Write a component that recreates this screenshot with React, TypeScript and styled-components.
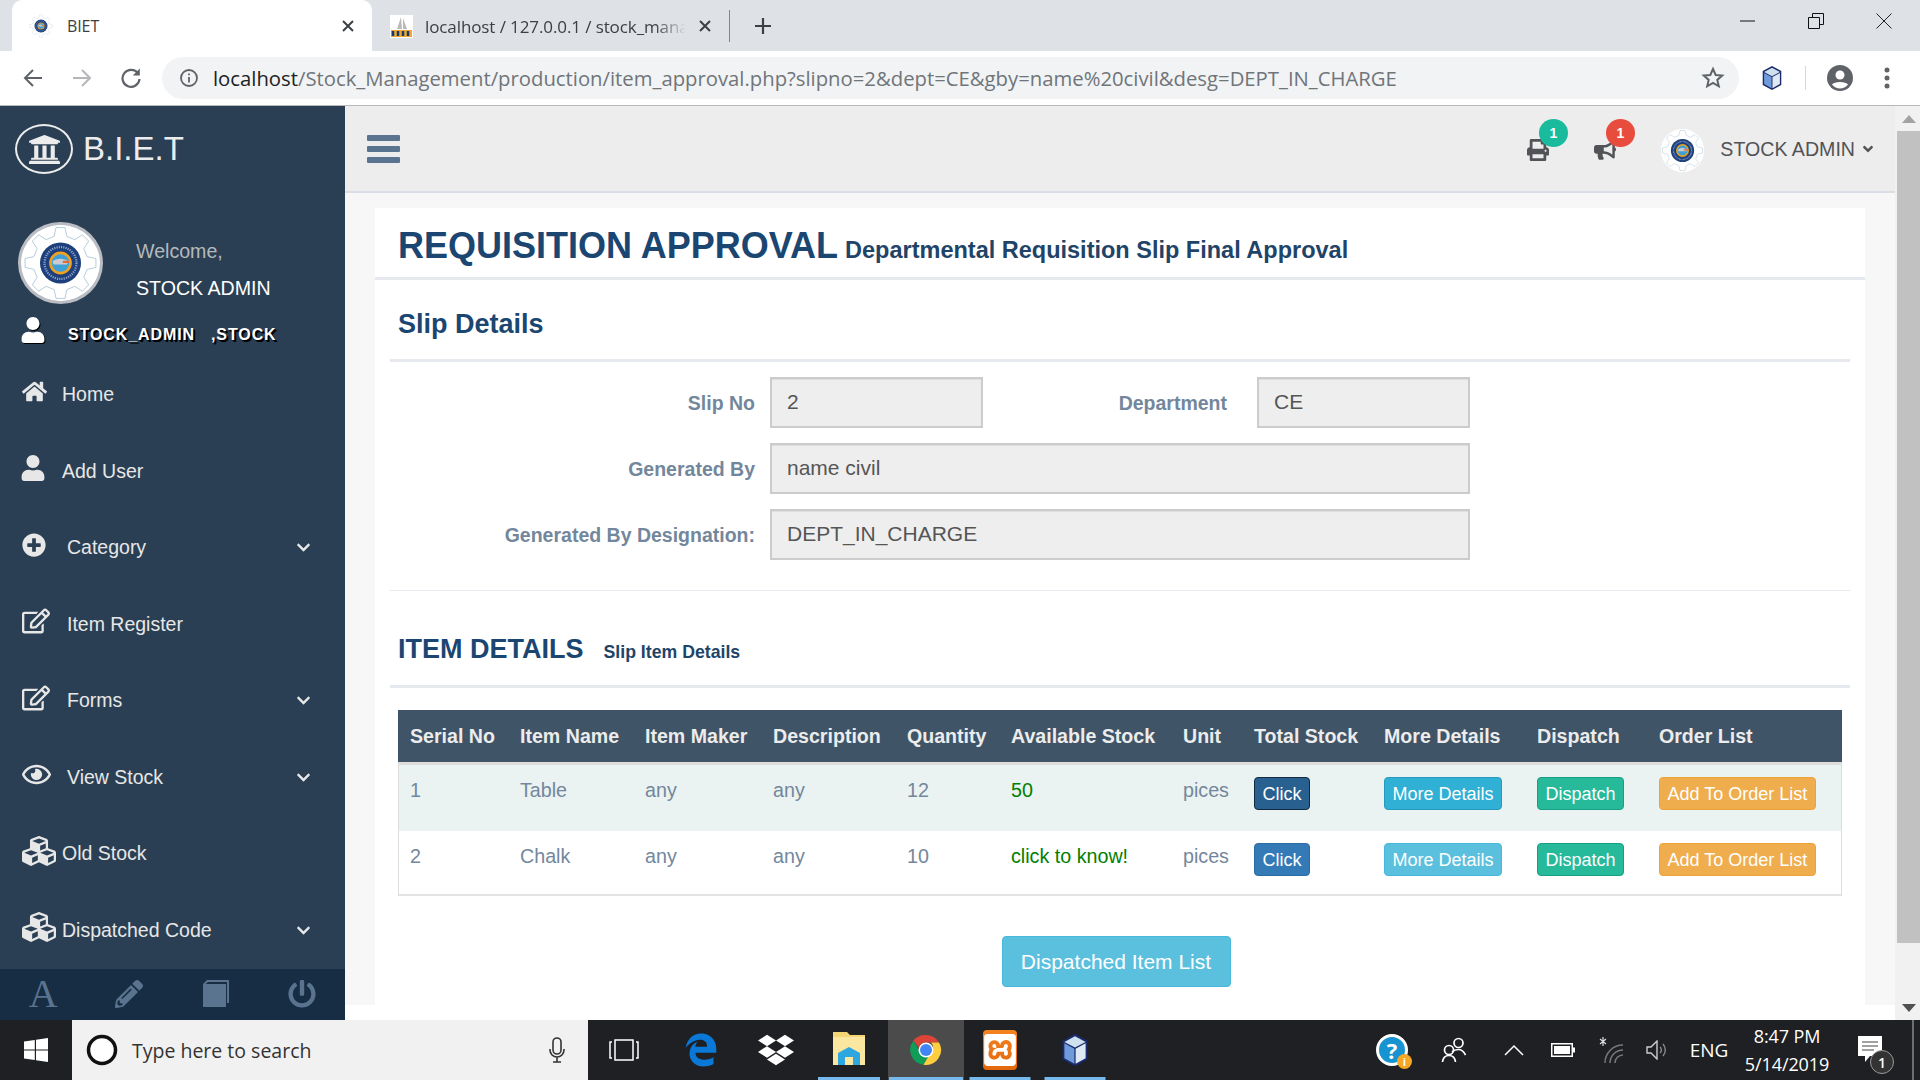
import React from "react";
import styled, { createGlobalStyle } from "styled-components";
import {
  FaAngleDown,
  FaBullhorn,
  FaChevronDown,
  FaCubes,
  FaDropbox,
  FaEdgeLegacy,
  FaHome,
  FaPencilAlt,
  FaPlusCircle,
  FaPowerOff,
  FaPrint,
  FaRegEdit,
  FaRegEye,
  FaUniversity,
  FaUser,
} from "react-icons/fa";
import { SiXampp } from "react-icons/si";

const GlobalStyle = createGlobalStyle`
  html, body {
    margin: 0;
    padding: 0;
    width: 1920px;
    height: 1080px;
    overflow: hidden;
    background: #fff;
    font-family: "Liberation Sans", Arial, sans-serif;
  }
  * { box-sizing: border-box; }
`;

const Screen = styled.div`
  width: 1920px;
  height: 1080px;
  display: flex;
  flex-direction: column;
  overflow: hidden;
`;

/* ---------- browser chrome ---------- */

const TabStrip = styled.div`
  height: 51px;
  flex-shrink: 0;
  background: #dee1e6;
  display: flex;
  align-items: stretch;
  padding-left: 12px;
  font-family: "Open Sans", sans-serif;
  font-size: 16px;
  color: #3c4043;
`;

const ActiveTab = styled.div`
  width: 360px;
  background: #fff;
  border-radius: 10px 10px 0 0;
  display: flex;
  align-items: center;
  padding: 0 17px;
  gap: 14px;
`;

const IdleTab = styled.div`
  width: 358px;
  display: flex;
  align-items: center;
  padding: 0 17px 0 18px;
  gap: 12px;
  border-right: 1px solid #80868b;
  margin: 10px 0 9px;
  font-size: 17px;
`;

const TabTitle = styled.span`
  flex: 1;
  white-space: nowrap;
  overflow: hidden;
  letter-spacing: -0.1px;
`;

const FadedTitle = styled(TabTitle)`
  mask-image: linear-gradient(to right, #000 88%, transparent);
`;

const PlusTab = styled.div`
  width: 66px;
  display: flex;
  align-items: center;
  justify-content: center;
`;

const WindowControls = styled.div`
  margin-left: auto;
  display: flex;
  height: 41px;
  margin-right: 2px;
`;

const WindowButton = styled.div`
  width: 68px;
  height: 41px;
  display: flex;
  align-items: center;
  justify-content: center;
`;

const Toolbar = styled.div`
  height: 55px;
  flex-shrink: 0;
  background: #fff;
  border-bottom: 1px solid #b9b9b9;
  display: flex;
  align-items: center;
  padding-left: 8px;
`;

const NavIcon = styled.div`
  width: 49px;
  height: 40px;
  display: flex;
  align-items: center;
  justify-content: center;
`;

const Omnibox = styled.div`
  width: 1577px;
  height: 42px;
  margin-left: 7px;
  border-radius: 21px;
  background: #f1f3f4;
  display: flex;
  align-items: center;
  padding: 0 14px 0 17px;
  font-family: "Open Sans", sans-serif;
  font-size: 20.3px;
  color: #70757a;
  white-space: nowrap;
`;

const UrlText = styled.span`
  margin-left: 14px;
  flex: 1;
  & b { font-weight: 400; color: #202124; }
`;

const ToolbarRight = styled.div`
  flex: 1;
  display: flex;
  align-items: center;
`;

const ToolbarIcon = styled.div<{ $w: number }>`
  width: ${(p) => p.$w}px;
  display: flex;
  align-items: center;
  justify-content: center;
`;

const ToolbarSep = styled.div`
  width: 1px;
  height: 24px;
  background: #d6d8da;
`;

/* ---------- page body ---------- */

const Body = styled.div`
  flex: 1;
  display: flex;
  min-height: 0;
`;

const Sidebar = styled.aside`
  width: 345px;
  flex-shrink: 0;
  background: #2a3f54;
  display: flex;
  flex-direction: column;
  color: #ececec;
`;

const Brand = styled.div`
  height: 116px;
  padding: 18px 0 0 15px;
  display: flex;
  align-items: flex-start;
  gap: 10px;
`;

const BrandMark = styled.div`
  width: 58px;
  height: 50px;
  border: 2px solid #ececec;
  border-radius: 50%;
  display: flex;
  align-items: center;
  justify-content: center;
  font-size: 33px;
`;

const BrandName = styled.span`
  font-size: 33px;
  line-height: 50px;
`;

const Profile = styled.div`
  display: flex;
  height: 92px;
  padding-left: 18px;
`;

const ProfilePhoto = styled.div`
  width: 85px;
  height: 82px;
  border: 3px solid #b9bcc2;
  border-radius: 50%;
  background: #fff;
  overflow: hidden;
  flex-shrink: 0;
  & svg { width: 100%; height: 100%; display: block; }
`;

const ProfileText = styled.div`
  margin-left: 33px;
  padding-top: 11px;
  font-size: 19.6px;
  line-height: 37px;
  color: #fff;
  & span { display: block; color: #b5b9bd; }
`;

const RoleRow = styled.div`
  height: 42px;
  display: flex;
  align-items: flex-start;
  padding: 3px 0 0 20px;
  font-size: 16px;
  line-height: 18px;
  font-weight: 700;
  color: #fff;
  text-shadow: 1px 1px 1px #000, 2px 2px 0 #000;
  white-space: pre;
  letter-spacing: 0.9px;
  & svg { filter: drop-shadow(1px 1px 0 #000); }
  & span { margin: 9px 0 0 22px; }
`;

const Menu = styled.ul`
  list-style: none;
  margin: 0;
  padding: 0;
  flex: 1;
`;

const MenuItem = styled.li<{ $icon: number; $gap: number; $shift?: number }>`
  height: 76.5px;
  display: flex;
  align-items: center;
  padding: 1px 34px 0 22px;
  font-size: 19.5px;
  color: #e7e7e7;
  & > svg:first-child {
    flex-shrink: 0;
    margin-left: ${(p) => p.$shift ?? 0}px;
    margin-right: ${(p) => p.$gap}px;
    margin-top: -6px;
    font-size: ${(p) => p.$icon}px;
  }
  & > span { flex: 1; }
`;

const SidebarFooter = styled.div`
  height: 51px;
  flex-shrink: 0;
  background: #172d44;
  display: grid;
  grid-template-columns: repeat(4, 86.25px);
  color: #5a738e;
`;

const FooterCell = styled.div`
  display: flex;
  align-items: center;
  justify-content: center;
  font-size: 28px;
  padding-bottom: 2px;
`;

const SerifA = styled.span`
  font-family: "Liberation Serif", serif;
  font-size: 40px;
  line-height: 1;
`;

const Main = styled.main`
  flex: 1;
  min-width: 0;
  display: flex;
  flex-direction: column;
  background: #fff;
`;

const TopNav = styled.header`
  height: 87px;
  flex-shrink: 0;
  background: #ededed;
  border-bottom: 2px solid #d9dee4;
  display: flex;
  align-items: center;
  padding: 0 19px 0 22px;
  color: #515356;
`;

const Hamburger = styled.div`
  display: flex;
  flex-direction: column;
  gap: 5px;
  margin-right: auto;
  & i {
    display: block;
    width: 33px;
    height: 6px;
    border-radius: 1px;
    background: #5a738e;
  }
`;

const NavBell = styled.div<{ $mr: number }>`
  position: relative;
  font-size: 22px;
  display: flex;
  margin-right: ${(p) => p.$mr}px;
  margin-top: 2px;
`;

const Badge = styled.span<{ $bg: string }>`
  position: absolute;
  left: 11.5px;
  top: -20px;
  width: 29px;
  height: 28px;
  border-radius: 50%;
  background: ${(p) => p.$bg};
  color: #fff;
  font-size: 14px;
  font-weight: 700;
  display: flex;
  align-items: center;
  justify-content: center;
`;

const UserMenu = styled.div`
  display: flex;
  align-items: center;
  font-size: 19.6px;
  gap: 16px;
  padding-top: 1px;
  & svg.caret { margin-left: -11px; font-size: 16px; }
`;

const AvatarSmall = styled.div`
  width: 43px;
  height: 43px;
  border-radius: 50%;
  background: #fff;
  display: flex;
  margin-top: 3px;
`;

const Content = styled.div`
  height: 812px;
  flex-shrink: 0;
  background: #f7f7f7;
  padding: 15px 30px 0;
`;

const Panel = styled.section`
  height: 797px;
  background: #fff;
  overflow: hidden;
`;

const PageTitle = styled.div`
  height: 72px;
  border-bottom: 3px solid #e6e9ed;
  padding: 17px 0 0 23px;
  display: flex;
  align-items: baseline;
  gap: 7px;
  color: #1b4671;
  font-weight: 700;
  white-space: nowrap;
`;

const TitleMain = styled.span`
  font-size: 36px;
`;

const TitleSub = styled.span`
  font-size: 23.5px;
  color: #1f4468;
`;

const Section = styled.div`
  padding: 0 15px;
`;

const SectionHead = styled.div<{ $h: number; $pt: number }>`
  height: ${(p) => p.$h}px;
  border-bottom: 3px solid #e6e9ed;
  padding: ${(p) => p.$pt}px 0 0 8px;
  display: flex;
  align-items: center;
  gap: 20px;
  color: #1b4671;
  font-weight: 700;
  font-size: 27px;
  white-space: nowrap;
  & small {
    font-size: 17.7px;
    color: #1f4468;
    padding-top: 6px;
  }
`;

const SlipForm = styled.div`
  padding: 15px 0 0;
  height: 229px;
  border-bottom: 1px solid #e6e9ed;
  display: grid;
  grid-template-columns: 380px 213px 274px 213px;
  grid-auto-rows: 51px;
  row-gap: 15px;
`;

const FieldLabel = styled.label<{ $pad: number }>`
  font-size: 19.5px;
  font-weight: 700;
  color: #73879c;
  text-align: right;
  padding-right: ${(p) => p.$pad}px;
  line-height: 53px;
  white-space: nowrap;
`;

const Field = styled.div<{ $wide?: boolean }>`
  height: 51px;
  background: #eee;
  border: 2px solid #ccc;
  box-shadow: inset 0 1px 1px rgba(0, 0, 0, 0.075);
  padding-left: 15px;
  font-size: 21px;
  line-height: 45px;
  color: #555;
  grid-column: ${(p) => (p.$wide ? "2 / 5" : "auto")};
`;

const TableWrap = styled.div`
  padding: 22px 23px 0;
`;

const ItemTable = styled.table`
  width: 1444px;
  table-layout: fixed;
  border-collapse: separate;
  border-spacing: 0;
  font-size: 19.7px;
  color: #73879c;
  & th {
    background: #405467;
    color: #ececec;
    height: 55px;
    padding: 0 0 0 12px;
    text-align: left;
    font-weight: 700;
    font-size: 19.6px;
    border-bottom: 3px solid #ddd;
    white-space: nowrap;
  }
  & td {
    height: 66px;
    padding: 14px 0 0 12px;
    vertical-align: top;
    white-space: nowrap;
  }
  & td:first-child {
    border-left: 1px solid #ddd;
    padding-left: 11px;
  }
  & td:last-child {
    border-right: 1px solid #ddd;
  }
  & tbody tr:first-child td {
    background: #eaf3f1;
  }
  & tbody tr:last-child td {
    height: 65px;
    border-bottom: 2px solid #e3e3e3;
  }
`;

const Stock = styled.span`
  color: #008000;
`;

const ActionButton = styled.button<{ $bg: string; $border: string }>`
  display: block;
  height: 33px;
  margin-top: -2px;
  padding: 0 7.5px;
  border-radius: 4px;
  border: 1.5px solid ${(p) => p.$border};
  background: ${(p) => p.$bg};
  color: #fff;
  font-family: "Liberation Sans", sans-serif;
  font-size: 18px;
  line-height: 28px;
  white-space: nowrap;
`;

const ListRow = styled.div`
  display: flex;
  justify-content: center;
  padding: 40px 8px 0 0;
`;

const ListButton = styled.button`
  width: 229px;
  height: 51px;
  border-radius: 4px;
  border: 1.5px solid #46b8da;
  background: #5bc0de;
  color: #fff;
  font-family: "Liberation Sans", sans-serif;
  font-size: 21px;
`;

const Scrollbar = styled.div`
  width: 25px;
  flex-shrink: 0;
  background: #f1f1f1;
  display: flex;
  flex-direction: column;
  padding-left: 2px;
`;

const ScrollEnd = styled.div`
  height: 25px;
  display: flex;
  align-items: center;
  justify-content: center;
`;

const ScrollThumb = styled.div`
  height: 812px;
  background: #c1c1c1;
`;

const ScrollTrack = styled.div`
  flex: 1;
`;

/* ---------- taskbar ---------- */

const Taskbar = styled.footer`
  height: 60px;
  flex-shrink: 0;
  background: #1f2023;
  display: flex;
  align-items: stretch;
  color: #fff;
  font-family: "Open Sans", sans-serif;
`;

const StartButton = styled.div`
  width: 72px;
  display: flex;
  align-items: center;
  justify-content: center;
`;

const SearchBox = styled.div`
  width: 516px;
  background: #f1f1f1;
  display: flex;
  align-items: center;
  padding: 0 23px 0 14px;
  color: #333;
  font-size: 19.5px;
`;

const SearchPlaceholder = styled.span`
  flex: 1;
  margin-left: 14px;
`;

const TaskButton = styled.div<{ $on?: boolean; $run?: number; $w: number }>`
  position: relative;
  width: ${(p) => p.$w}px;
  display: flex;
  align-items: center;
  justify-content: center;
  background: ${(p) => (p.$on ? "#4b4b4c" : "transparent")};
  &::after {
    content: "";
    display: ${(p) => (p.$run ? "block" : "none")};
    position: absolute;
    bottom: 0;
    left: 50%;
    width: ${(p) => p.$run}px;
    height: 3px;
    transform: translateX(-50%);
    background: #76b9ed;
  }
`;

const XamppTile = styled.div`
  width: 34px;
  height: 40px;
  border-radius: 4px;
  background: linear-gradient(#f58220, #e3680f);
  display: flex;
  align-items: center;
  justify-content: center;
  color: #fff;
  font-size: 32px;
`;

const Tray = styled.div`
  margin-left: auto;
  display: flex;
  align-items: center;
  font-size: 19px;
  padding-right: 6px;
`;

const TrayIcon = styled.div<{ $w: number }>`
  width: ${(p) => p.$w}px;
  display: flex;
  align-items: center;
  justify-content: center;
`;

const HelpBadge = styled.div`
  position: relative;
  width: 32px;
  height: 32px;
  border-radius: 50%;
  border: 3px solid #fff;
  background: #1793d1;
  color: #fff;
  font-size: 22px;
  font-weight: 700;
  display: flex;
  align-items: center;
  justify-content: center;
  & span {
    position: absolute;
    right: -7px;
    bottom: -6px;
    width: 15px;
    height: 15px;
    border-radius: 50%;
    background: #f5a623;
    font-size: 11px;
    line-height: 15px;
    text-align: center;
  }
`;

const Clock = styled.div`
  width: 86px;
  text-align: center;
  font-size: 18px;
  line-height: 28px;
  white-space: nowrap;
  letter-spacing: -0.1px;
  display: flex;
  flex-direction: column;
  align-items: center;
`;

const Notify = styled.div`
  position: relative;
  width: 84px;
  height: 60px;
  border-right: 2px solid #6d6e70;
  display: flex;
  align-items: center;
  padding: 0 0 2px 28px;
`;

const NotifyCount = styled.span`
  position: absolute;
  left: 40px;
  top: 30px;
  width: 24px;
  height: 24px;
  border-radius: 50%;
  border: 1px solid #999;
  background: #333;
  font-size: 14px;
  font-weight: 600;
  display: flex;
  align-items: center;
  justify-content: center;
`;

/* ---------- drawings ---------- */

const gearPath = (() => {
  const pts: string[] = [];
  const teeth = 8;
  for (let i = 0; i < teeth; i++) {
    const a = (i / teeth) * Math.PI * 2 - Math.PI / 2;
    const s = (Math.PI * 2) / teeth;
    const p = (r: number, t: number) =>
      `${(50 + r * Math.cos(t)).toFixed(1)} ${(50 + r * Math.sin(t)).toFixed(1)}`;
    pts.push(p(36, a - s * 0.3), p(47, a - s * 0.16), p(47, a + s * 0.16), p(36, a + s * 0.3));
  }
  return "M" + pts.join("L") + "Z";
})();

const Seal = ({ size }: { size: number }) => (
  <svg width={size} height={size} viewBox="0 0 100 100">
    <circle cx="50" cy="50" r="50" fill="#fff" />
    <path d={gearPath} fill="none" stroke="#9fbdd0" strokeWidth="1" />
    <circle cx="50" cy="50" r="27" fill="#1d3f7c" />
    <circle cx="50" cy="50" r="21" fill="none" stroke="#8fa6cc" strokeWidth="3" strokeDasharray="1.500 1.500" />
    <circle cx="50" cy="50" r="15" fill="#f0a11f" />
    <circle cx="50" cy="50" r="11.5" fill="#3fa0d6" />
    <path d="M39.500 48c5-5 15-5 21 0l-2 4H41z" fill="#c9ccd2" />
    <path d="M53 47h8v3h-8z" fill="#e8672a" />
  </svg>
);

const CubeIcon = ({ w, h }: { w: number; h: number }) => (
  <svg width={w} height={h} viewBox="0 0 24 28">
    <path d="M12 1 22 6.500v15L12 27 2 21.500V6.500z" fill="#1a2a6b" />
    <path d="M12 3 20.500 7.500 12 12 3.500 7.500z" fill="#cfe0ee" />
    <path d="M3.500 8.500 11.500 13v12l-8-4.500z" fill="#6f9bdb" />
    <path d="M20.500 8.500 12.500 13v12l8-4.500z" fill="#dfe9f3" />
  </svg>
);

const WinLogo = () => (
  <svg width="24" height="24" viewBox="0 0 24 24" fill="#fff">
    <path d="M0 3.400 10.800 1.900v9.500H0zM12 1.700 24 0v11.400H12zM0 12.600h10.800v9.500L0 20.600zM12 12.600h12V24l-12-1.700z" />
  </svg>
);

const ChromeLogo = () => (
  <svg width="32" height="32" viewBox="0 0 32 32">
    <path d="M16 1a15 15 0 0 1 13 7.500H16a7.500 7.500 0 0 0-7.200 5.300L3.500 6.500A15 15 0 0 1 16 1z" fill="#db4437" />
    <path d="M3.500 6.500l6.600 11.400a7.500 7.500 0 0 0 7.900 5.400L13.500 30.800A15 15 0 0 1 3.500 6.500z" fill="#0f9d58" />
    <path d="M29 8.500A15 15 0 0 1 13.500 30.800L20 19.800A7.500 7.500 0 0 0 21 8.500z" fill="#ffcd40" />
    <circle cx="16" cy="16" r="7.500" fill="#fff" />
    <circle cx="16" cy="16" r="6" fill="#4285f4" />
  </svg>
);

const FolderLogo = () => (
  <svg width="32" height="38" viewBox="0 0 32 38">
    <path d="M0 1h14l3 3h15v30H0z" fill="#f4d675" />
    <path d="M0 6h32v28H0z" fill="#fbe7a0" />
    <path d="M5 34V22l11-6 11 6v12h-7v-8h-8v8z" fill="#2ea7e0" />
  </svg>
);

const headers = [
  "Serial No",
  "Item Name",
  "Item Maker",
  "Description",
  "Quantity",
  "Available Stock",
  "Unit",
  "Total Stock",
  "More Details",
  "Dispatch",
  "Order List",
];

const colWidths = [110, 125, 128, 134, 104, 172, 71, 130, 153, 122, 195];

const rows = [
  { no: 1, name: "Table", qty: 12, stock: "50", clickBg: "#286090", clickBd: "#122b40", moreBg: "#31b0d5", moreBd: "#269abc" },
  { no: 2, name: "Chalk", qty: 10, stock: "click to know!", clickBg: "#337ab7", clickBd: "#2e6da4", moreBg: "#5bc0de", moreBd: "#46b8da" },
];

const CloseGlyph = () => (
  <svg width="14" height="14" viewBox="0 0 14 14" stroke="#3c4043" strokeWidth="2">
    <path d="M2 2l10 10M12 2 2 12" />
  </svg>
);

const App = () => {
  return (
    <Screen>
      <GlobalStyle />
      <TabStrip>
        <ActiveTab>
          <Seal size={24} />
          <TabTitle>BIET</TabTitle>
          <CloseGlyph />
        </ActiveTab>
        <IdleTab>
          <svg width="23" height="23" viewBox="0 0 23 23">
            <rect width="23" height="23" fill="#fff" />
            <path d="M7 14 11 2l1 12zM13 14V3l4 11z" fill="#b9b9b9" />
            <rect x="1" y="15" width="21" height="7" fill="#f0a830" />
            <path d="M3 21v-5M8 21v-5M13 21v-5M18 21v-5" stroke="#1a3a6b" strokeWidth="2.500" />
          </svg>
          <FadedTitle>localhost / 127.0.0.1 / stock_management</FadedTitle>
          <CloseGlyph />
        </IdleTab>
        <PlusTab>
          <svg width="18" height="18" viewBox="0 0 18 18" stroke="#3c4043" strokeWidth="2.200">
            <path d="M9 1v16M1 9h16" />
          </svg>
        </PlusTab>
        <WindowControls>
          <WindowButton>
            <svg width="16" height="2" viewBox="0 0 16 2">
              <path d="M0 1h15" stroke="#111" />
            </svg>
          </WindowButton>
          <WindowButton>
            <svg width="16" height="16" viewBox="0 0 16 16" fill="none" stroke="#111">
              <path d="M.5 4.500h11v11H.5zM4.500 4.500v-4h11v11h-4" />
            </svg>
          </WindowButton>
          <WindowButton>
            <svg width="16" height="16" viewBox="0 0 16 16" stroke="#222">
              <path d="M.5.500l15 15M15.500.500l-15 15" />
            </svg>
          </WindowButton>
        </WindowControls>
      </TabStrip>

      <Toolbar>
        <NavIcon>
          <svg width="20" height="20" viewBox="0 0 20 20" fill="none" stroke="#5f6368" strokeWidth="2">
            <path d="M19 10H2M10 2l-8 8 8 8" />
          </svg>
        </NavIcon>
        <NavIcon>
          <svg width="20" height="20" viewBox="0 0 20 20" fill="none" stroke="#b4b6b9" strokeWidth="2">
            <path d="M1 10h17M10 2l8 8-8 8" />
          </svg>
        </NavIcon>
        <NavIcon>
          <svg width="22" height="22" viewBox="0 0 22 22" fill="none" stroke="#5f6368" strokeWidth="2.200">
            <path d="M18 6.500A8.500 8.500 0 1 0 19.500 12" />
            <path d="M19.800 1.500v7h-7z" fill="#5f6368" stroke="none" />
          </svg>
        </NavIcon>
        <Omnibox>
          <svg width="20" height="20" viewBox="0 0 20 20" fill="none" stroke="#5f6368" strokeWidth="1.800">
            <circle cx="10" cy="10" r="8" />
            <path d="M10 9v5.500M10 5.500v1.800" />
          </svg>
          <UrlText>
            <b>localhost</b>/Stock_Management/production/item_approval.php?slipno=2&amp;dept=CE&amp;gby=name%20civil&amp;desg=DEPT_IN_CHARGE
          </UrlText>
          <svg width="24" height="24" viewBox="0 0 24 24" fill="none" stroke="#5f6368" strokeWidth="2">
            <path d="M12 3l2.700 6 6.500.6-4.900 4.300 1.500 6.400L12 17l-5.800 3.300 1.500-6.400L2.800 9.600 9.300 9z" />
          </svg>
        </Omnibox>
        <ToolbarRight>
          <ToolbarIcon $w={66}>
            <CubeIcon w={24} h={26} />
          </ToolbarIcon>
          <ToolbarSep />
          <ToolbarIcon $w={67}>
            <svg width="26" height="26" viewBox="0 0 26 26">
              <circle cx="13" cy="13" r="13" fill="#5f6368" />
              <circle cx="13" cy="10" r="4.500" fill="#fff" />
              <path d="M5 19.500c2-3.500 14-3.500 16 0-2 2.800-5 4-8 4s-6-1.200-8-4z" fill="#fff" />
            </svg>
          </ToolbarIcon>
          <ToolbarIcon $w={28}>
            <svg width="6" height="22" viewBox="0 0 6 22" fill="#5f6368">
              <circle cx="3" cy="3" r="2.500" />
              <circle cx="3" cy="11" r="2.500" />
              <circle cx="3" cy="19" r="2.500" />
            </svg>
          </ToolbarIcon>
        </ToolbarRight>
      </Toolbar>

      <Body>
        <Sidebar>
          <Brand>
            <BrandMark>
              <FaUniversity />
            </BrandMark>
            <BrandName>B.I.E.T</BrandName>
          </Brand>
          <Profile>
            <ProfilePhoto>
              <Seal size={79} />
            </ProfilePhoto>
            <ProfileText>
              <span>Welcome,</span>
              STOCK ADMIN
            </ProfileText>
          </Profile>
          <RoleRow>
            <FaUser size={26} />
            <span>STOCK_ADMIN   ,STOCK</span>
          </RoleRow>
          <Menu>
            <MenuItem $icon={25} $gap={15}>
              <FaHome />
              <span>Home</span>
            </MenuItem>
            <MenuItem $icon={26} $gap={16} $shift={-2}>
              <FaUser />
              <span>Add User</span>
            </MenuItem>
            <MenuItem $icon={24} $gap={21}>
              <FaPlusCircle />
              <span>Category</span>
              <FaChevronDown size={15} />
            </MenuItem>
            <MenuItem $icon={28} $gap={17}>
              <FaRegEdit />
              <span>Item Register</span>
            </MenuItem>
            <MenuItem $icon={28} $gap={17}>
              <FaRegEdit />
              <span>Forms</span>
              <FaChevronDown size={15} />
            </MenuItem>
            <MenuItem $icon={29} $gap={16}>
              <FaRegEye />
              <span>View Stock</span>
              <FaChevronDown size={15} />
            </MenuItem>
            <MenuItem $icon={34} $gap={6}>
              <FaCubes />
              <span>Old Stock</span>
            </MenuItem>
            <MenuItem $icon={34} $gap={6}>
              <FaCubes />
              <span>Dispatched Code</span>
              <FaChevronDown size={15} />
            </MenuItem>
          </Menu>
          <SidebarFooter>
            <FooterCell>
              <SerifA>A</SerifA>
            </FooterCell>
            <FooterCell>
              <FaPencilAlt />
            </FooterCell>
            <FooterCell>
              <svg width="26" height="27" viewBox="0 0 26 27" fill="#5a738e">
                <path d="M0 4 4 0h22v23h-2V2H5L2.500 4H23v23H0z" />
              </svg>
            </FooterCell>
            <FooterCell>
              <FaPowerOff />
            </FooterCell>
          </SidebarFooter>
        </Sidebar>

        <Main>
          <TopNav>
            <Hamburger>
              <i />
              <i />
              <i />
            </Hamburger>
            <NavBell $mr={45}>
              <FaPrint />
              <Badge $bg="#1abb9c">1</Badge>
            </NavBell>
            <NavBell $mr={45}>
              <FaBullhorn />
              <Badge $bg="#e74c3c">1</Badge>
            </NavBell>
            <UserMenu>
              <AvatarSmall>
                <Seal size={43} />
              </AvatarSmall>
              STOCK ADMIN
              <FaAngleDown className="caret" />
            </UserMenu>
          </TopNav>
          <Content>
            <Panel>
              <PageTitle>
                <TitleMain>REQUISITION APPROVAL</TitleMain>
                <TitleSub>Departmental Requisition Slip Final Approval</TitleSub>
              </PageTitle>
              <Section>
                <SectionHead $h={82} $pt={10}>Slip Details</SectionHead>
                <SlipForm>
                  <FieldLabel $pad={15}>Slip No</FieldLabel>
                  <Field>2</Field>
                  <FieldLabel $pad={30}>Department</FieldLabel>
                  <Field>CE</Field>
                  <FieldLabel $pad={15}>Generated By</FieldLabel>
                  <Field $wide>name civil</Field>
                  <FieldLabel $pad={15}>Generated By Designation:</FieldLabel>
                  <Field $wide>DEPT_IN_CHARGE</Field>
                </SlipForm>
                <SectionHead $h={97} $pt={22}>
                  ITEM DETAILS
                  <small>Slip Item Details</small>
                </SectionHead>
              </Section>
              <TableWrap>
                <ItemTable>
                  <colgroup>
                    {colWidths.map((w, i) => (
                      <col key={i} style={{ width: w }} />
                    ))}
                  </colgroup>
                  <thead>
                    <tr>
                      {headers.map((h) => (
                        <th key={h}>{h}</th>
                      ))}
                    </tr>
                  </thead>
                  <tbody>
                    {rows.map((r) => (
                      <tr key={r.no}>
                        <td>{r.no}</td>
                        <td>{r.name}</td>
                        <td>any</td>
                        <td>any</td>
                        <td>{r.qty}</td>
                        <td>
                          <Stock>{r.stock}</Stock>
                        </td>
                        <td>pices</td>
                        <td>
                          <ActionButton $bg={r.clickBg} $border={r.clickBd}>Click</ActionButton>
                        </td>
                        <td>
                          <ActionButton $bg={r.moreBg} $border={r.moreBd}>More Details</ActionButton>
                        </td>
                        <td>
                          <ActionButton $bg="#26b99a" $border="#169f85">Dispatch</ActionButton>
                        </td>
                        <td>
                          <ActionButton $bg="#f0ad4e" $border="#eea236">Add To Order List</ActionButton>
                        </td>
                      </tr>
                    ))}
                  </tbody>
                </ItemTable>
              </TableWrap>
              <ListRow>
                <ListButton>Dispatched Item List</ListButton>
              </ListRow>
            </Panel>
          </Content>
        </Main>

        <Scrollbar>
          <ScrollEnd>
            <svg width="14" height="8" viewBox="0 0 14 8" fill="#a3a3a3">
              <path d="M7 0l7 8H0z" />
            </svg>
          </ScrollEnd>
          <ScrollThumb />
          <ScrollTrack />
          <ScrollEnd>
            <svg width="14" height="8" viewBox="0 0 14 8" fill="#505050">
              <path d="M0 0h14L7 8z" />
            </svg>
          </ScrollEnd>
        </Scrollbar>
      </Body>

      <Taskbar>
        <StartButton>
          <WinLogo />
        </StartButton>
        <SearchBox>
          <svg width="32" height="32" viewBox="0 0 32 32" fill="#fff" stroke="#111" strokeWidth="3.500">
            <circle cx="16" cy="16" r="13.500" />
          </svg>
          <SearchPlaceholder>Type here to search</SearchPlaceholder>
          <svg width="16" height="26" viewBox="0 0 16 26" fill="none" stroke="#333" strokeWidth="1.600">
            <rect x="4" y="1" width="8" height="16" rx="4" />
            <path d="M1 12v1a7 7 0 0 0 14 0v-1M8 20v5M4 25h8" />
          </svg>
        </SearchBox>
        <TaskButton $w={72}>
          <svg width="30" height="22" viewBox="0 0 30 22" fill="none" stroke="#fff" strokeWidth="1.500">
            <rect x="6" y="1" width="18" height="20" />
            <path d="M3 3H1v16h2M27 3h2v16h-2" />
          </svg>
        </TaskButton>
        <TaskButton $w={82}>
          <FaEdgeLegacy size={34} color="#0a78d7" />
        </TaskButton>
        <TaskButton $w={68}>
          <FaDropbox size={36} color="#fff" />
        </TaskButton>
        <TaskButton $w={78} $run={62}>
          <FolderLogo />
        </TaskButton>
        <TaskButton $w={76} $run={74} $on>
          <ChromeLogo />
        </TaskButton>
        <TaskButton $w={72} $run={61}>
          <XamppTile>
            <SiXampp />
          </XamppTile>
        </TaskButton>
        <TaskButton $w={78} $run={61}>
          <CubeIcon w={30} h={38} />
        </TaskButton>
        <Tray>
          <TrayIcon $w={64}>
            <HelpBadge>
              ?<span>i</span>
            </HelpBadge>
          </TrayIcon>
          <TrayIcon $w={60}>
            <svg width="26" height="26" viewBox="0 0 26 26" fill="none" stroke="#fff" strokeWidth="1.700">
              <circle cx="17.500" cy="6" r="4.500" />
              <path d="M11 15c2-2 4-2.500 6.500-2.500S22.500 14 24.500 18" />
              <circle cx="8" cy="13" r="4.500" />
              <path d="M1.500 25c.5-4 3-6.500 6.500-6.500s6 2.500 6.500 6.500" />
            </svg>
          </TrayIcon>
          <TrayIcon $w={60}>
            <svg width="20" height="12" viewBox="0 0 20 12" fill="none" stroke="#fff" strokeWidth="1.500">
              <path d="M1 11l9-9 9 9" />
            </svg>
          </TrayIcon>
          <TrayIcon $w={38}>
            <svg width="24" height="14" viewBox="0 0 24 14">
              <rect x=".75" y=".75" width="20.500" height="12.500" fill="#1f2023" stroke="#fff" strokeWidth="1.500" />
              <rect x="3" y="3" width="16" height="8" fill="#fff" />
              <rect x="22" y="4.500" width="2" height="5" fill="#fff" />
            </svg>
          </TrayIcon>
          <TrayIcon $w={60}>
            <svg width="26" height="26" viewBox="0 0 26 26" fill="none" stroke="#77787a" strokeWidth="1.500">
              <path d="M6 26A18 18 0 0 1 24 8M11 26A13 13 0 0 1 24 13M16 26a8 8 0 0 1 8-8" />
              <path d="M1 2l6 5M7 2 1 7M4 0v9" stroke="#ddd" strokeWidth="1.200" />
            </svg>
          </TrayIcon>
          <TrayIcon $w={32}>
            <svg width="24" height="20" viewBox="0 0 24 20" fill="none" stroke="#ccc" strokeWidth="1.400">
              <path d="M1 7h4l6-6v18l-6-6H1z" />
              <path d="M14 7a4 4 0 0 1 0 6M17 4a9 9 0 0 1 0 12" stroke="#888" />
            </svg>
          </TrayIcon>
          <TrayIcon $w={70}>ENG</TrayIcon>
          <Clock>
            <span>8:47 PM</span>
            <span>5/14/2019</span>
          </Clock>
          <Notify>
            <svg width="24" height="26" viewBox="0 0 24 26">
              <path d="M0 0h24v20H12l-5 6v-6H0z" fill="#fff" />
              <path d="M4 6h16M4 10h16M4 14h12" stroke="#444" strokeWidth="1.200" />
            </svg>
            <NotifyCount>1</NotifyCount>
          </Notify>
        </Tray>
      </Taskbar>
    </Screen>
  );
};

export default App;
